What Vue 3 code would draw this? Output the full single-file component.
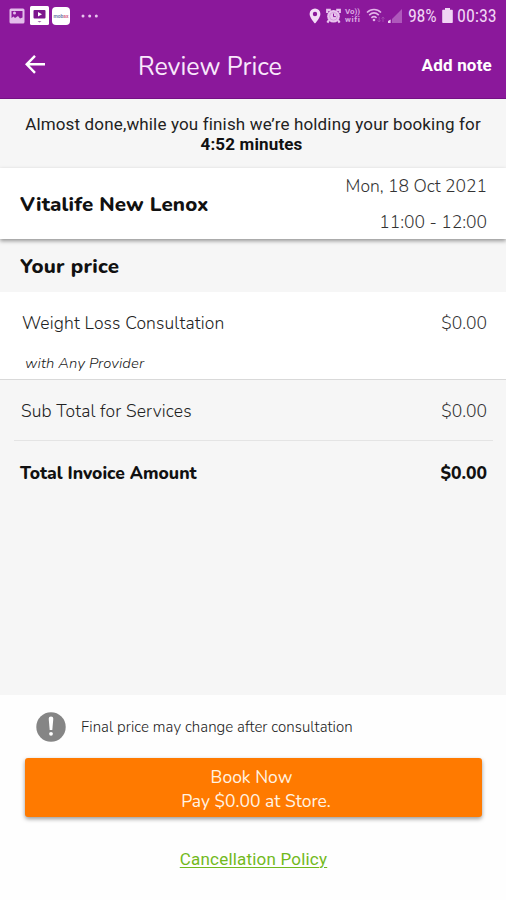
<template>
  <div class="review-page">
    <!-- status bar -->
    <div class="status-bar">
      <div class="status-left">
        <svg class="icon-picture" width="16" height="16" viewBox="0 0 16 16">
          <rect x="0.5" y="0.5" width="15" height="15" rx="1.5" fill="#e3bdea" />
          <path d="M2.5 3h11v6.5l-2.5 1-2-2.5-3 2-1.5-1.5-2 1.5z" fill="#8b189b" />
          <circle cx="5.5" cy="5" r="1.5" fill="#e3bdea" />
        </svg>
        <svg class="icon-video" width="19" height="19" viewBox="0 0 19 19">
          <rect width="19" height="19" rx="1.5" fill="#fff" />
          <rect x="3.5" y="4" width="12" height="8.5" rx="1" fill="#7c168d" />
          <path d="M8 6l4 2.2L8 10.5z" fill="#fff" />
          <path d="M7.5 15h4l-2 1.4z" fill="#a668b0" />
        </svg>
        <div class="app-chip">mob<span class="chip-accent">ax</span></div>
        <svg class="icon-dots" width="18" height="4" viewBox="0 0 18 4">
          <circle cx="2" cy="2" r="1.5" fill="#e7c4ed" />
          <circle cx="8.7" cy="2" r="1.5" fill="#e7c4ed" />
          <circle cx="15.3" cy="2" r="1.5" fill="#e7c4ed" />
        </svg>
      </div>
      <div class="status-right">
        <svg width="12" height="16" viewBox="0 0 12 16">
          <path d="M6 0.5a5.4 5.4 0 0 0-5.4 5.4C0.6 9.7 6 15.5 6 15.5s5.4-5.8 5.4-9.6A5.4 5.4 0 0 0 6 0.5zm0 3.3a2.2 2.2 0 1 1 0 4.4 2.2 2.2 0 0 1 0-4.4z" fill="#f3dcf6" fill-rule="evenodd" />
        </svg>
        <svg class="icon-alarm" width="15" height="16" viewBox="0 0 15 16">
          <path d="M1.2 5V1.8h3.6M13.8 5V1.8h-3.6M3 12l-1.6 2.6M12 12l1.6 2.6" stroke="#e8c3ed" stroke-width="2.2" fill="none" />
          <circle cx="7.5" cy="8.3" r="6.3" fill="#e8c3ed" />
          <circle cx="7.5" cy="8.3" r="3.9" fill="none" stroke="#cf96d8" stroke-width="0.8" />
          <path d="M7.5 5.6v3h2.3" stroke="#8b189b" stroke-width="1" fill="none" />
        </svg>
        <div class="vowifi"><span>Vo))</span><span class="vowifi-bottom">wifi</span></div>
        <svg class="icon-wifi" width="19" height="15" viewBox="0 0 19 15">
          <path d="M1 4.5c4-4 10-4 14 0M3.2 7.2c3-2.8 6.6-2.8 9.6 0M5.4 9.8c1.7-1.5 3.5-1.5 5.2 0" stroke="#e2b4e9" stroke-width="1.6" fill="none" />
          <circle cx="8" cy="12" r="1.3" fill="#e2b4e9" />
          <path d="M13.2 9v5m-1.5-1.6l1.5 1.6 1.5-1.6M17 14V9m-1.4 1.6L17 9l1.4 1.6" stroke="#a34bb0" stroke-width="0.9" fill="none" />
        </svg>
        <svg class="icon-signal" width="16" height="16" viewBox="0 0 16 16">
          <path d="M15 1v14H5V11z" fill="#ae58bb" />
          <path d="M1 15v-2l2.6-1.4V15z" fill="#f0d5f4" />
        </svg>
        <span class="status-text battery-text">98%</span>
        <svg class="icon-battery" width="11" height="15" viewBox="0 0 11 15">
          <path d="M3 0h5v1.8h2a.8.8 0 0 1 .8.8v11.6a.8.8 0 0 1-.8.8H1a.8.8 0 0 1-.8-.8V2.6a.8.8 0 0 1 .8-.8h2z" fill="#f0d5f4" />
        </svg>
        <span class="status-text clock-text">00:33</span>
      </div>
    </div>

    <!-- app header -->
    <header class="app-header">
      <svg class="back" width="22" height="20" viewBox="0 0 22 20">
        <path d="M21 10.3H3M11 1.8l-8.3 8.5 8.3 8.5" stroke="#fff" stroke-width="2.4" fill="none" />
      </svg>
      <h1 class="title">Review Price</h1>
      <span class="add-note">Add note</span>
    </header>

    <section class="hold-notice">
      <span class="hold-text">Almost done,while you finish we’re holding your booking for</span>
      <strong class="hold-time">{{ holdTime }}</strong>
    </section>

    <section class="store">
      <h2 class="store-name">Vitalife New Lenox</h2>
      <div class="slot">
        <span class="slot-date">Mon, 18 Oct 2021</span>
        <span class="slot-time">11:00 - 12:00</span>
      </div>
    </section>

    <h3 class="price-heading">Your price</h3>

    <section v-for="item in services" :key="item.name" class="service">
      <div class="service-row">
        <span class="service-name">{{ item.name }}</span>
        <span class="amount">{{ item.price }}</span>
      </div>
      <em class="provider">with {{ item.provider }}</em>
    </section>

    <section class="totals">
      <div class="sub-total">
        <span class="sub-label">Sub Total for Services</span>
        <span class="amount">{{ total }}</span>
      </div>
      <div class="total">
        <span class="total-label">Total Invoice Amount</span>
        <span class="total-amount">{{ total }}</span>
      </div>
    </section>

    <footer class="footer">
      <div class="warning">
        <svg width="30" height="30" viewBox="0 0 30 30">
          <circle cx="15" cy="15" r="14.7" fill="#858585" />
          <path d="M12.7 6.8a2.3 2.3 0 0 1 4.6 0L16.3 18h-2.6z" fill="#fff" />
          <circle cx="15" cy="21.8" r="1.9" fill="#fff" />
        </svg>
        <span class="warning-text">Final price may change after consultation</span>
      </div>
      <button class="book-btn">
        <span class="book-title">Book Now</span>
        <span class="book-pay">Pay {{ total }} at Store.</span>
      </button>
      <a class="policy">Cancellation Policy</a>
    </footer>
  </div>
</template>

<script setup>
import { ref } from 'vue';

const holdTime = ref('4:52 minutes');
const total = ref('$0.00');
const services = ref([
  { name: 'Weight Loss Consultation', provider: 'Any Provider', price: '$0.00' }
]);
</script>

<style>
body {
  margin: 0;
}
</style>

<style scoped>
.review-page {
  width: 506px;
  height: 900px;
  overflow: hidden;
  display: flex;
  flex-direction: column;
  background: #f6f6f6;
  color: #222;
  font-family: Nunito, "Noto Sans", sans-serif;
  white-space: nowrap;
}

.status-bar {
  height: 32px;
  flex: none;
  display: flex;
  justify-content: space-between;
  box-sizing: border-box;
  padding: 0 9px;
  background: #8b189b;
  font-family: Roboto, sans-serif;
}
.status-left,
.status-right {
  display: flex;
  align-items: center;
  height: 31px;
}
.icon-video {
  margin-left: 5px;
}
.app-chip {
  width: 18px;
  height: 18px;
  margin-left: 3px;
  border-radius: 4px;
  background: #fff;
  color: #7581ad;
  font-size: 5px;
  font-weight: 700;
  line-height: 18px;
  text-align: center;
}
.chip-accent {
  color: #d96a8c;
}
.icon-dots {
  margin-left: 11px;
}
.icon-alarm {
  margin-left: 5px;
}
.vowifi {
  display: flex;
  flex-direction: column;
  width: 15px;
  margin-left: 4px;
  color: #dcaae4;
  font-size: 8px;
  font-weight: 700;
  line-height: 8px;
}
.vowifi-bottom {
  letter-spacing: 0.6px;
}
.icon-wifi {
  margin-left: 6px;
}
.icon-signal {
  margin-left: 2px;
}
.status-text {
  color: #f0d5f4;
  font-family: "Roboto Condensed", Roboto, sans-serif;
  font-size: 18px;
  line-height: 20px;
}
.battery-text {
  width: 30px;
  margin-left: 5px;
  letter-spacing: -0.3px;
}
.icon-battery {
  margin-left: 4px;
}
.clock-text {
  width: 40px;
  margin-left: 4px;
}

.app-header {
  height: 67px;
  flex: none;
  display: flex;
  align-items: center;
  box-sizing: border-box;
  padding: 0 14px 2px 24px;
  border-bottom: 1px solid #741184;
  background: #8b189b;
  color: #fff;
}
.title {
  margin: 5px 0 0 92px;
  color: #f9e8fb;
  font-size: 25px;
  font-weight: 400;
  line-height: 30px;
}
.add-note {
  margin: 2px 0 0 auto;
  font-family: Roboto, sans-serif;
  font-size: 17px;
  font-weight: 700;
  letter-spacing: 0.2px;
}

.hold-notice {
  height: 69px;
  flex: none;
  display: flex;
  flex-direction: column;
  align-items: center;
  box-sizing: border-box;
  padding-top: 15px;
  font-family: Roboto, sans-serif;
  font-size: 17px;
  letter-spacing: 0.15px;
  line-height: 20px;
}
.hold-time {
  margin-right: 3px;
  color: #111;
}

.store {
  position: relative;
  height: 71px;
  flex: none;
  display: flex;
  justify-content: space-between;
  box-sizing: border-box;
  padding: 0 19px 0 20px;
  background: #fff;
  box-shadow: 0 2px 4px rgba(0, 0, 0, 0.4);
}
.store-name {
  margin: 22px 0 0;
  color: #111;
  font-size: 20.5px;
  font-weight: 800;
  letter-spacing: 0.14px;
  line-height: 28px;
}
.slot {
  display: flex;
  flex-direction: column;
  align-items: flex-end;
  gap: 11px;
  padding-top: 6px;
  color: #333;
  font-size: 17.5px;
  font-weight: 300;
  line-height: 24.5px;
}

.price-heading {
  height: 53px;
  flex: none;
  margin: 0;
  padding-left: 20px;
  color: #111;
  font-size: 20.5px;
  font-weight: 800;
  letter-spacing: 0.25px;
  line-height: 54px;
}

.service {
  height: 88px;
  flex: none;
  display: flex;
  flex-direction: column;
  box-sizing: border-box;
  padding: 18px 19px 0 22px;
  border-bottom: 1px solid #d9d9d9;
  background: #fff;
}
.service-row {
  display: flex;
  justify-content: space-between;
  font-size: 17.5px;
  font-weight: 300;
  line-height: 26px;
}
.service-name,
.sub-label {
  color: #222;
  letter-spacing: 0.14px;
}
.amount {
  color: #333;
}
.provider {
  margin: 17px 0 0 3px;
  color: #222;
  font-size: 14.8px;
  font-weight: 300;
  letter-spacing: 0.12px;
  line-height: 20px;
}

.totals {
  flex: 1;
  padding: 0 13px 0 14px;
}
.sub-total,
.total {
  display: flex;
  justify-content: space-between;
  padding: 0 6px 0 7px;
}
.sub-total {
  height: 60px;
  border-bottom: 1px solid #e4e4e4;
  font-size: 17.5px;
  font-weight: 300;
  line-height: 62px;
}
.total {
  height: 61px;
  padding-left: 6px;
  color: #111;
  font-size: 17.5px;
  font-weight: 800;
  line-height: 64px;
}

.footer {
  height: 205px;
  flex: none;
  display: flex;
  flex-direction: column;
  box-sizing: border-box;
  padding: 17px 24px 0 25px;
  background: #fefefe;
}
.warning {
  display: flex;
  align-items: center;
  gap: 15px;
  height: 30px;
  padding-left: 11px;
  color: #222;
  font-size: 15px;
  font-weight: 300;
  letter-spacing: 0.04px;
}
.book-btn {
  display: flex;
  flex-direction: column;
  align-items: center;
  height: 59px;
  margin: 16px 0 0;
  padding: 8px 0 0;
  border: 0;
  border-radius: 3px;
  background: #ff7a00;
  box-shadow: 0 2px 4px rgba(0, 0, 0, 0.4);
  color: #fff3e4;
  font-family: inherit;
  font-size: 17.5px;
  line-height: 23.5px;
}
.book-title {
  margin-right: 4px;
}
.book-pay {
  margin-left: 5px;
}
.policy {
  align-self: center;
  margin-top: 32px;
  color: #72b91c;
  font-family: Roboto, sans-serif;
  font-size: 17px;
  letter-spacing: 0.2px;
  line-height: 20px;
  text-decoration: underline;
  text-decoration-thickness: 1px;
  text-underline-offset: 2px;
}
</style>
